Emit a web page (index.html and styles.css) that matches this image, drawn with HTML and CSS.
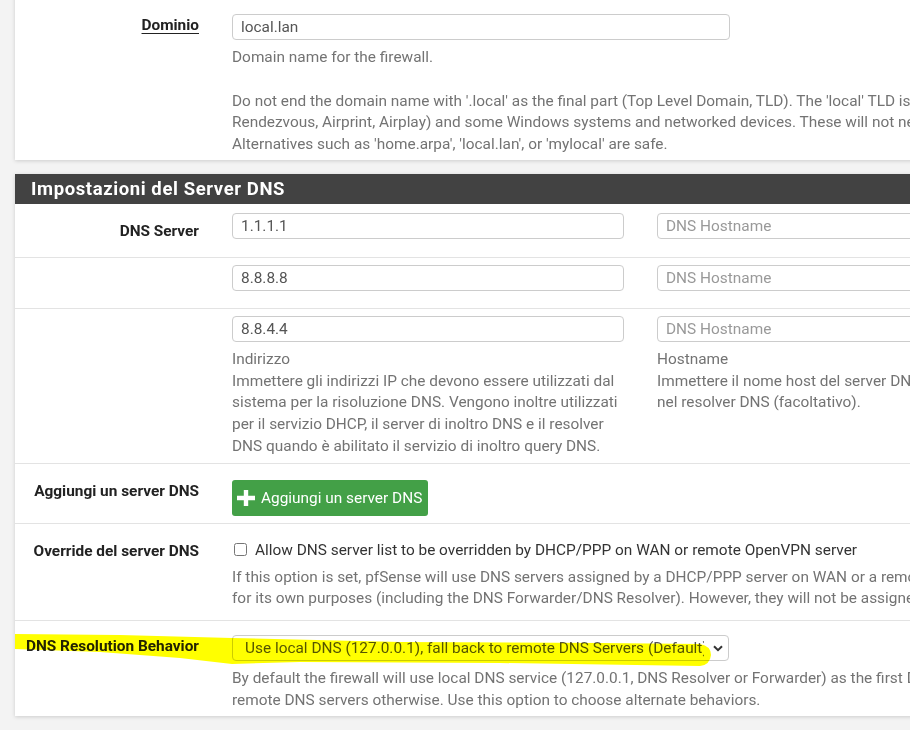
FILE: index.html
```html
<!DOCTYPE html>
<html lang="it">
<head>
    <meta charset="UTF-8">
    <title>Sistema: Configurazione generale</title>
    <link rel="stylesheet" href="styles.css">
</head>
<body>

<div class="page">
    <!-- System panel (only the domain row is visible) -->
    <div class="panel">
        <div class="row row-domain">
            <div class="label"><span class="underline">Dominio</span></div>
            <div class="value">
                <input type="text" class="field field-wide" value="local.lan">
                <div class="help">
                    Domain name for the firewall.<br><br>
                    Do not end the domain name with '.local' as the final part (Top Level Domain, TLD). The 'local' TLD is widely used by mDNS (e.g. Avahi, Bonjour,<br>
                    Rendezvous, Airprint, Airplay) and some Windows systems and networked devices. These will not network correctly if the router uses '.local'.<br>
                    Alternatives such as 'home.arpa', 'local.lan', or 'mylocal' are safe.
                </div>
            </div>
        </div>
    </div>

    <!-- DNS server settings -->
    <div class="panel">
        <div class="panel-heading">Impostazioni del Server DNS</div>

        <div class="row">
            <div class="label">DNS Server</div>
            <div class="value pair">
                <input type="text" class="field" value="1.1.1.1">
                <input type="text" class="field" placeholder="DNS Hostname">
            </div>
        </div>

        <div class="row">
            <div class="label"></div>
            <div class="value pair">
                <input type="text" class="field" value="8.8.8.8">
                <input type="text" class="field" placeholder="DNS Hostname">
            </div>
        </div>

        <div class="row">
            <div class="label"></div>
            <div class="value pair pair-help">
                <div>
                    <input type="text" class="field" value="8.8.4.4">
                    <div class="help">
                        Indirizzo<br>
                        Immettere gli indirizzi IP che devono essere utilizzati dal sistema per la risoluzione DNS. Vengono inoltre utilizzati per il servizio DHCP, il server di inoltro DNS e il resolver DNS quando è abilitato il servizio di inoltro query DNS.
                    </div>
                </div>
                <div>
                    <input type="text" class="field" placeholder="DNS Hostname">
                    <div class="help">
                        Hostname<br>
                        Immettere il nome host del server DNS per la verifica TLS nel resolver DNS (facoltativo).
                    </div>
                </div>
            </div>
        </div>

        <div class="row row-button">
            <div class="label">Aggiungi un server DNS</div>
            <div class="value">
                <button class="btn-success">
                    <svg width="18" height="16" viewBox="0 0 18 16"><path d="M6.8 0h4.4v5.8H18v4.4h-6.8V16H6.8v-5.8H0V5.8h6.8z" fill="#fff"/></svg>
                    Aggiungi un server DNS
                </button>
            </div>
        </div>

        <div class="row row-check">
            <div class="label">Override del server DNS</div>
            <div class="value">
                <label class="check"><input type="checkbox"> Allow DNS server list to be overridden by DHCP/PPP on WAN or remote OpenVPN server</label>
                <div class="help">
                    If this option is set, pfSense will use DNS servers assigned by a DHCP/PPP server on WAN or a remote OpenVPN server (if configured)<br>
                    for its own purposes (including the DNS Forwarder/DNS Resolver). However, they will not be assigned to DHCP clients.
                </div>
            </div>
        </div>

        <div class="row row-select">
            <div class="label">DNS Resolution Behavior</div>
            <div class="value">
                <div class="select-wrap">
                    <select class="field select">
                        <option>Use local DNS (127.0.0.1), fall back to remote DNS Servers (Default)</option>
                    </select>
                    <svg class="chevron" width="10" height="7" viewBox="0 0 10 7"><path d="M1 1.2l4 4 4-4" fill="none" stroke="#333" stroke-width="2"/></svg>
                </div>
                <div class="help">
                    By default the firewall will use local DNS service (127.0.0.1, DNS Resolver or Forwarder) as the first DNS server when possible, and it will fall back to<br>
                    remote DNS servers otherwise. Use this option to choose alternate behaviors.
                </div>
            </div>
            <!-- yellow marker stroke drawn on the screenshot -->
            <svg class="marker" width="720" height="50" viewBox="0 0 720 50">
                <path d="M-1 13 L105 14 L217 17 L385 21 L585 22 L685 23 Q696 25 696 34 Q695 44 685 45 L485 42 L285 41 L217 43 L165 37 L85 31 L-1 28 Z" fill="#ffff00"/>
            </svg>
        </div>
    </div>
</div>

</body>
</html>
```

FILE: styles.css
```css
body {
    margin: 0;
    background-color: #f3f3f3;
    font-family: Roboto, "Liberation Sans", sans-serif;
    font-size: 15.4px;
    color: #222;
    overflow: hidden;
}
.page {
    width: 1300px;
    padding-left: 15px;
    margin-top: -12px;
}
.panel {
    background-color: #fff;
    box-shadow: 0 1px 4px rgba(0, 0, 0, 0.16);
    margin-bottom: 14px;
}
.panel-heading {
    background-color: #424242;
    color: #fff;
    font-weight: bold;
    font-size: 18.5px;
    letter-spacing: 0.6px;
    height: 30px;
    line-height: 30px;
    padding-left: 16px;
}
.row {
    display: grid;
    grid-template-columns: 200px 1fr;
    border-top: 1px solid #e3e3e3;
    position: relative;
}
.panel-heading + .row,
.row-domain {
    border-top: none;
}
.label {
    text-align: right;
    padding: 17px 16px 0 0;
    font-weight: bold;
    line-height: 20px;
}
.value {
    padding: 7px 0 17px 17px;
}
.panel-heading + .row .value {
    padding: 9px 0 18px 17px;
}
.underline {
    text-decoration: underline;
    text-underline-offset: 3px;
}
/* Inputs */
.field {
    display: block;
    box-sizing: border-box;
    width: 392px;
    height: 26px;
    border: 1px solid #ccc;
    border-radius: 4px;
    padding: 0 8px;
    font-family: inherit;
    font-size: 15.4px;
    color: #555;
    background-color: #fff;
    margin: 0;
}
.field::placeholder {
    color: #999;
}
.field-wide {
    width: 498px;
}
.pair {
    display: grid;
    grid-template-columns: 392px 392px;
    column-gap: 33px;
}
.help {
    color: #737373;
    line-height: 21.75px;
    margin-top: 7px;
}
/* Row specifics */
.row-domain .label {
    padding-top: 27px;
}
.row-domain .value {
    padding: 26px 0 4px 17px;
}
.pair-help {
    padding-bottom: 5px;
}
.row-button .value {
    padding: 16px 0 7px 17px;
}
.btn-success {
    display: inline-flex;
    align-items: center;
    gap: 6px;
    height: 36px;
    padding: 0 6px 0 5px;
    background-color: #43a047;
    border: none;
    border-radius: 3px;
    color: #fff;
    font-family: inherit;
    font-size: 15.4px;
    cursor: pointer;
}
.row-check .value {
    padding: 15px 0 10px 17px;
}
.check {
    display: flex;
    align-items: center;
    gap: 8px;
    line-height: 22px;
    color: #333;
}
.check input {
    margin: 0 0 0 2px;
    width: 13px;
    height: 13px;
}
.check + .help {
    margin-top: 6px;
}
.row-select .label {
    padding-top: 15px;
}
.row-select .value {
    padding: 14px 0 4px 17px;
}
.select-wrap {
    position: relative;
    width: 497px;
}
.select {
    width: 497px;
    padding: 0 24px 0 12px;
    appearance: none;
    -webkit-appearance: none;
}
.chevron {
    position: absolute;
    right: 6px;
    top: 10px;
}
.marker {
    position: absolute;
    left: 0;
    top: 0;
    mix-blend-mode: multiply;
    pointer-events: none;
}
```
